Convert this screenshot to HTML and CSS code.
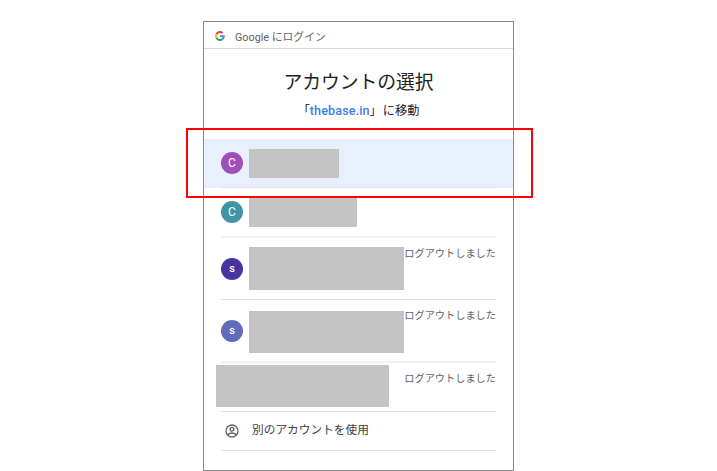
FILE: index.html
```html
<!DOCTYPE html>
<html lang="ja">
<head>
    <meta charset="UTF-8">
    <title>Google にログイン</title>
    <link rel="stylesheet" href="styles.css">
</head>
<body>
    <div class="card">
        <div class="header">
            <svg class="logo" viewBox="0 0 48 48">
                <path fill="#ea4335" d="M24 9.5c3.54 0 6.71 1.22 9.21 3.6l6.85-6.85C35.9 2.38 30.47 0 24 0 14.62 0 6.51 5.38 2.56 13.22l7.98 6.19C12.43 13.72 17.74 9.5 24 9.5z"/>
                <path fill="#4285f4" d="M46.98 24.55c0-1.57-.15-3.09-.38-4.55H24v9.02h12.94c-.58 2.96-2.26 5.48-4.78 7.18l7.73 6c4.51-4.18 7.09-10.36 7.09-17.65z"/>
                <path fill="#fbbc05" d="M10.53 28.59c-.48-1.45-.76-2.99-.76-4.59s.27-3.14.76-4.59l-7.98-6.19C.92 16.46 0 20.12 0 24c0 3.88.92 7.54 2.56 10.78l7.97-6.19z"/>
                <path fill="#34a853" d="M24 48c6.48 0 11.93-2.13 15.89-5.81l-7.73-6c-2.15 1.45-4.92 2.3-8.16 2.3-6.26 0-11.57-4.22-13.47-9.91l-7.98 6.19C6.51 42.62 14.62 48 24 48z"/>
            </svg>
            <span class="header-text">Google にログイン</span>
        </div>

        <h1>アカウントの選択</h1>
        <p class="subtitle"><span>「</span><a>thebase.in</a><span>」</span><span class="move">に移動</span></p>

        <ul class="accounts">
            <li class="selected">
                <div class="row">
                    <span class="avatar purple">C</span>
                    <span class="mask mask1"></span>
                </div>
            </li>
            <li>
                <div class="row thick">
                    <span class="avatar teal">C</span>
                    <span class="mask mask2"></span>
                </div>
            </li>
            <li>
                <div class="row tall">
                    <span class="avatar violet">s</span>
                    <span class="mask mask3"></span>
                    <span class="status">ログアウトしました</span>
                </div>
            </li>
            <li>
                <div class="row tall thick">
                    <span class="avatar indigo">s</span>
                    <span class="mask mask4"></span>
                    <span class="status">ログアウトしました</span>
                </div>
            </li>
            <li>
                <div class="row">
                    <span class="mask mask5"></span>
                    <span class="status">ログアウトしました</span>
                </div>
            </li>
            <li>
                <div class="row other">
                    <svg class="user-icon" viewBox="0 0 14 14" fill="none" stroke="#5f6368" stroke-width="1.3">
                        <circle cx="7" cy="7" r="6"/>
                        <circle cx="7" cy="5.3" r="1.9"/>
                        <path d="M2.7 10.9C3.8 9.6 5.3 9 7 9s3.2.6 4.3 1.9"/>
                    </svg>
                    <span class="other-text">別のアカウントを使用</span>
                </div>
            </li>
        </ul>
        <div class="highlight"></div>
    </div>
</body>
</html>
```

FILE: styles.css
```css
* {
    box-sizing: border-box;
}

body {
    margin: 0;
    padding-top: 21px;
    background-color: #fff;
    font-family: Roboto, "Noto Sans CJK JP", sans-serif;
    color: #202124;
}

.card {
    position: relative;
    width: 311px;
    height: 450px;
    margin-left: 203px;
    border: 1px solid #888;
}

.header {
    display: flex;
    align-items: center;
    height: 27px;
    padding-left: 11px;
    border-bottom: 1px solid #d5d6d8;
}

.logo {
    width: 10px;
    height: 10px;
    margin-top: 1px;
}

.header-text {
    margin: 5px 0 0 10px;
    font-size: 10.8px;
    line-height: 16px;
    color: #5f6368;
}

h1 {
    margin: 20px 0 0;
    font-size: 18.8px;
    font-weight: 400;
    line-height: 28px;
    text-align: center;
}

.subtitle {
    display: flex;
    justify-content: center;
    margin: 4px 0 0;
    height: 38px;
    font-size: 12.2px;
    line-height: 20px;
}

.subtitle a {
    font-size: 12.6px;
    font-weight: 500;
    letter-spacing: 0.1px;
    color: #3b7ded;
}

.subtitle .move {
    margin-left: 1px;
}

.accounts {
    list-style-type: none;
    margin: 0;
    padding: 0;
}

.accounts li {
    padding: 0 17px;
}

.accounts .selected {
    background-color: #e8f0fe;
}

.row {
    display: flex;
    align-items: center;
    height: 49px;
    border-bottom: 1px solid #e1e2e6;
}

.thick {
    height: 50px;
    border-bottom: 2px solid #f1f1f1;
}

.tall {
    height: 62px;
}

.tall.thick {
    height: 63px;
}

.avatar {
    width: 22px;
    height: 22px;
    margin-right: 6px;
    border-radius: 50%;
    font-size: 12px;
    line-height: 22px;
    text-align: center;
    color: #fff;
}

.purple {
    background-color: #a04fb8;
}

.teal {
    background-color: #4095a5;
}

.violet {
    background-color: #4a32a3;
}

.indigo {
    background-color: #5f6dbc;
}

.violet,
.indigo {
    font-size: 11px;
    font-weight: 500;
}

.mask {
    background-color: #c4c4c4;
}

.mask1 {
    width: 90px;
    height: 29px;
    margin-top: 1px;
}

.mask2 {
    width: 108px;
    height: 29px;
    margin-top: 1px;
}

.mask3 {
    width: 155px;
    height: 43px;
}

.mask4 {
    width: 155px;
    height: 42px;
    margin-top: 3px;
}

.mask5 {
    width: 173px;
    height: 42px;
    margin: -2px 0 0 -5px;
}

.status {
    align-self: flex-start;
    margin: 8px 0 0 auto;
    font-size: 10.2px;
    line-height: 16px;
    white-space: nowrap;
    color: #5f6368;
}

.other {
    height: 39px;
}

.user-icon {
    width: 14px;
    height: 14px;
    margin: -1px 0 0 4px;
}

.other-text {
    margin: -5px 0 0 13px;
    font-size: 11.7px;
    color: #3c4043;
}

/* red frame around the first account */
.highlight {
    position: absolute;
    top: 106px;
    left: -18px;
    width: 347px;
    height: 70px;
    border: 2px solid #f00;
}
```
